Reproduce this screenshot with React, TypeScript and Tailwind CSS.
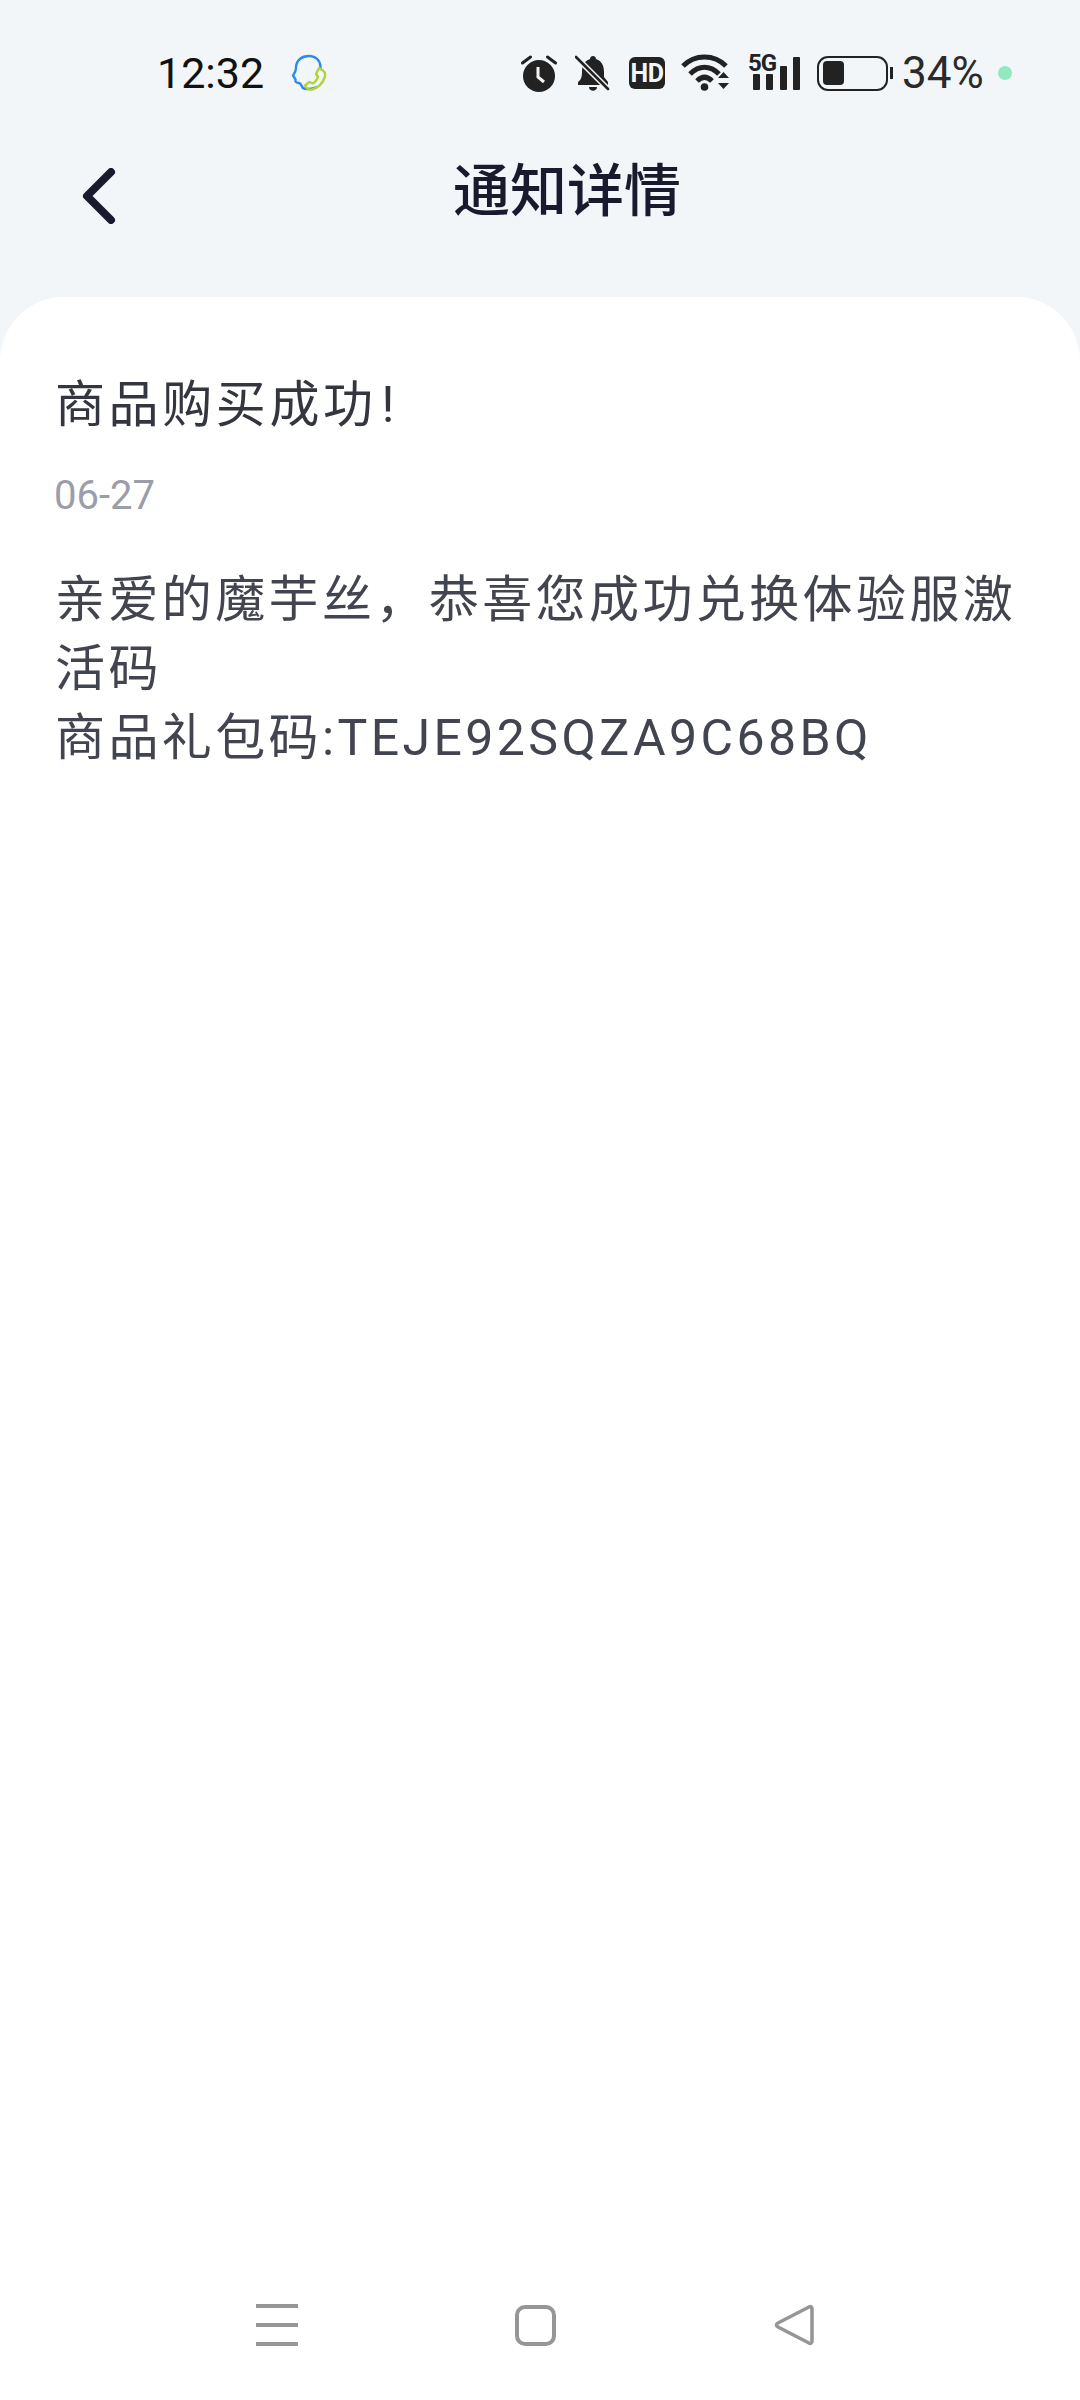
const font = { fontFamily: 'Roboto, "Noto Sans CJK SC", sans-serif' };

function Headset() {
  return (
    <svg width="36" height="38" viewBox="0 0 36 38" fill="none" strokeLinecap="round" strokeLinejoin="round">
      <path d="M12 34 C10 31 10 29.5 8 29 C5 29 4 27.5 4.5 25.5 L2 21.5 C4 19 5 17 5 14 C5 6 11 2 18 2 C25 2 29.5 7 29.5 13 V15" stroke="#2b8cf0" strokeWidth="2.4" />
      <path d="M12 34 C14 35.5 20 35.5 26 33" stroke="#2b8cf0" strokeWidth="2.4" />
      <path d="M28 14 L32 16.5 C34 18 34.5 21 33.5 24 C31.5 30 26 34.5 21 35.5 C18 36 15 34 14 31.5 L18.5 28 L21.5 29.5 C24.5 28 26.5 25 27 22.5 L25 20 Z" stroke="#b3d334" strokeWidth="2.4" />
    </svg>
  );
}

function Alarm() {
  return (
    <svg width="36" height="38" viewBox="0 0 36 38">
      <circle cx="18" cy="22" r="16" fill="#222" />
      <path d="M1.5 9 L9.5 3 M34.5 9 L26.5 3" stroke="#222" strokeWidth="3" strokeLinecap="round" />
      <path d="M17 13 V23 L23 28" stroke="#f2f6f9" strokeWidth="3" fill="none" />
    </svg>
  );
}

function BellOff() {
  return (
    <svg width="36" height="38" viewBox="0 0 36 38">
      <path d="M15 5 C15 1 21 1 21 5 C27 7 29 12 29 18 V23 L33 28 V31 H3 V28 C6 26 7 23 7 18 C7 12 9 7 15 5 Z" fill="#222" />
      <path d="M14 33 H22 C22 38 14 38 14 33 Z" fill="#222" />
      <path d="M1 3 L33 35" stroke="#f2f6f9" strokeWidth="5.5" />
      <path d="M1 3 L33 35" stroke="#222" strokeWidth="2.6" strokeLinecap="round" />
    </svg>
  );
}

function HdBadge() {
  return (
    <div className="w-[36px] h-[32px] rounded-[6px] bg-[#222] flex items-center justify-center text-[#f2f6f9] text-[25px] font-bold leading-none tracking-[-0.5px]">
      HD
    </div>
  );
}

function Wifi() {
  return (
    <svg width="52" height="40" viewBox="0 0 52 40" fill="none">
      <path d="M2 13 C14 1 33 1 45 13" stroke="#222" strokeWidth="5" />
      <path d="M9 21 C18 12 29 12 38 21" stroke="#222" strokeWidth="5" />
      <path d="M16 28 C21 23 26 23 31 28" stroke="#222" strokeWidth="5" />
      <circle cx="23.5" cy="34" r="3.8" fill="#222" />
      <path d="M37 25 L42.5 19 L48 25 Z M37 30 H48 L42.5 36 Z" fill="#222" />
    </svg>
  );
}

function Signal() {
  const bars = [
    { h: 'h-[16px]', key: 'a' },
    { h: 'h-[16px]', key: 'b' },
    { h: 'h-[24px]', key: 'c' },
    { h: 'h-[33px]', key: 'd' },
  ];
  return (
    <div className="relative w-[52px] h-[36px] flex items-end justify-end gap-[6.5px] mb-[2px]">
      <span className="absolute left-0 top-[-3px] text-[#222] text-[24px] font-bold leading-[24px] tracking-[-1px]">5G</span>
      {bars.map((b) => (
        <div key={b.key} className={`w-[7px] rounded-[1px] bg-[#222] ${b.h}`} />
      ))}
    </div>
  );
}

function Battery() {
  return (
    <div className="flex items-center">
      <div className="w-[71px] h-[35px] rounded-[11px] border-[2.5px] border-[#222] p-[3.5px]">
        <div className="w-[21px] h-full rounded-[4px] bg-[#222]" />
      </div>
      <div className="w-[3px] h-[12px] ml-[2px] bg-[#222]" />
    </div>
  );
}

function NavMenu() {
  return (
    <div className="w-[42px] flex flex-col gap-[15px]">
      <div className="h-[4px] bg-[#969696]" />
      <div className="h-[4px] bg-[#969696]" />
      <div className="h-[4px] bg-[#969696]" />
    </div>
  );
}

export default function App() {
  return (
    <div className="w-[1080px] h-[2400px] flex flex-col bg-[#f2f6f9]" style={font}>
      <div className="h-[146px] flex items-center pl-[157px]">
        <span className="text-[43px] leading-none text-[#111] w-[105px]">12:32</span>
        <div className="ml-[29px]"><Headset /></div>
        <div className="ml-[194px] flex items-center">
          <Alarm />
          <div className="ml-[18px]"><BellOff /></div>
          <div className="ml-[18px]"><HdBadge /></div>
          <div className="ml-[16px]"><Wifi /></div>
          <div className="ml-[15px]"><Signal /></div>
          <div className="ml-[17px]"><Battery /></div>
          <span className="ml-[9px] text-[44px] leading-none text-[#2a2a2a] w-[80px]">34%</span>
          <div className="ml-[16px] w-[14px] h-[14px] rounded-full bg-[#93e9bd]" />
        </div>
      </div>

      <div className="h-[151px] flex items-start pl-[82px]">
        <svg width="34" height="56" viewBox="0 0 34 56" fill="none" className="mt-[22px]">
          <path d="M29 4 L5 28 L29 52" stroke="#1a1a2e" strokeWidth="8" strokeLinecap="round" strokeLinejoin="round" />
        </svg>
        <h1 className="ml-[337px] mt-[8px] text-[57px] leading-[76px] font-medium text-[#1a1a2e]">通知详情</h1>
      </div>

      <div className="flex-1 flex flex-col bg-white rounded-t-[64px] pl-[55px] pr-[45px]">
        <h2 className="mt-[75px] text-[50px] leading-[66px] text-[#33353f] tracking-[3.6px]">
          商品购买成功<span className="ml-[5px]">!</span>
        </h2>
        <p className="mt-[32px] -ml-[1px] text-[40px] leading-[52px] text-[#9b9da8]">06-27</p>
        <p className="mt-[44px] text-[50px] leading-[69px] text-[#42444f] tracking-[3.4px]">
          亲爱的魔芋丝，恭喜您成功兑换体验服激活码
          <br />
          商品礼包码:TEJE92SQZA9C68BQ
        </p>

        <div className="mt-auto mb-[47px] flex items-center pl-[201px] h-[56px]">
          <NavMenu />
          <div className="ml-[217px] w-[41px] h-[41px] rounded-[10px] border-[4px] border-[#969696]" />
          <svg width="42" height="42" viewBox="0 0 42 42" fill="none" className="ml-[217px]">
            <path d="M36 3 C38 2 39 3 39 5 V37 C39 39 37.5 40 36 39 L5 23 C3 22 3 20 5 19 Z" stroke="#969696" strokeWidth="3.6" strokeLinejoin="round" />
          </svg>
        </div>
      </div>
    </div>
  );
}
